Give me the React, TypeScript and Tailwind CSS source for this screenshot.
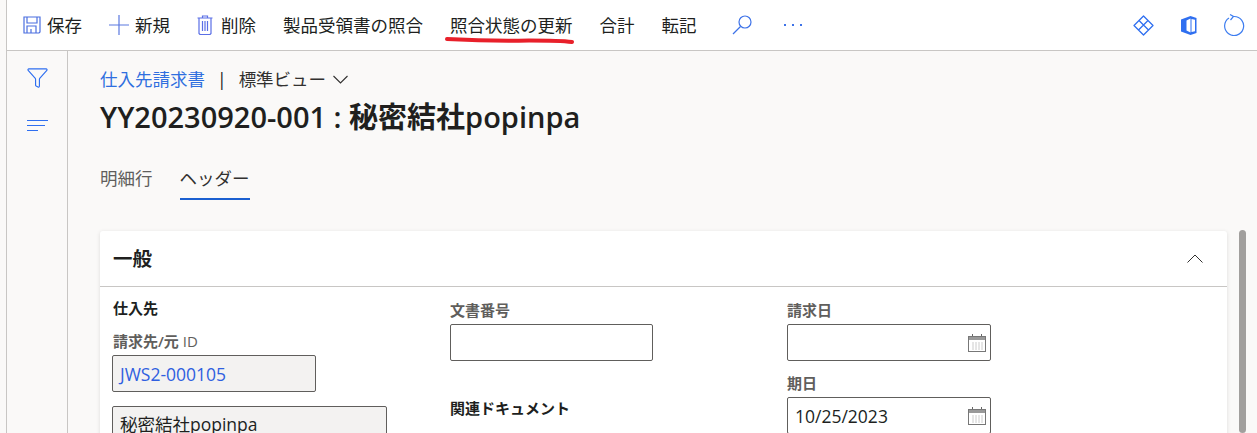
import type { ReactNode } from 'react'
import { Filter } from 'lucide-react'

const font = { fontFamily: '"Open Sans", "Noto Sans CJK JP", sans-serif' }

const SaveIcon = () => (
  <svg width="18" height="18" viewBox="0 0 18 18" fill="none" stroke="#4b6fe0" strokeWidth="1.2">
    <path d="M1 1h16v15l-1 1H1z" />
    <path d="M4 1v6h10V1M4 17v-7h9v7M8 13v4" />
  </svg>
)

const PlusIcon = () => (
  <svg width="20" height="20" viewBox="0 0 20 20" stroke="#5a78e0" strokeWidth="1.2">
    <path d="M10 0v20M0 10h20" />
  </svg>
)

const TrashIcon = () => (
  <svg width="16" height="20" viewBox="0 0 16 20" fill="none" stroke="#5a6fe6" strokeWidth="1.2">
    <path d="M.5 3h15M5.500 3V1h5v2M2 3v15.500l1 1h10l1-1V3M5.500 6v10M8 6v10M10.500 6v10" />
  </svg>
)

const SearchIcon = () => (
  <svg width="20" height="20" viewBox="0 0 20 20" fill="none" stroke="#3d72e8" strokeWidth="1.2">
    <circle cx="13" cy="7" r="6" />
    <path d="M8.500 11.500L1 19" />
  </svg>
)

const DotsIcon = () => (
  <svg width="20" height="4" viewBox="0 0 20 4" fill="#3d72e8">
    <rect x="1" y="1" width="2" height="2" />
    <rect x="9" y="1" width="2" height="2" />
    <rect x="17" y="1" width="2" height="2" />
  </svg>
)

const DiamondIcon = () => (
  <svg width="21" height="21" viewBox="0 0 21 21" fill="none" stroke="#2f6ff0" strokeWidth="1.3">
    <path d="M10.500 1l9.500 9.500-9.500 9.500L1 10.500zM6 5.500l9.500 9.500M15 5.500L5.500 15" strokeLinejoin="round" />
  </svg>
)

const OfficeIcon = () => (
  <svg width="16" height="19" viewBox="0 0 16 19">
    <path d="M0 3.500L9.500 0 15.500 2v15L9.500 19 0 15.500z" fill="#2f6ff0" />
    <path d="M5.500 4.500l4-2v14l-4-2z" fill="#fff" />
    <path d="M10.500 3l3.500 .8v11.500l-3.500 .8z" fill="#fff" />
  </svg>
)

const RefreshIcon = () => (
  <svg width="21" height="22" viewBox="0 0 21 22" fill="none" stroke="#3d7df0" strokeWidth="1.2">
    <path d="M10 2.500a9.500 9.500 0 1 1-5 1.500" />
    <path d="M6 .5L9.500 2.500 6.500 6" />
  </svg>
)

const NavIcon = () => (
  <svg width="21" height="13" viewBox="0 0 21 13" stroke="#2f6ff0" strokeWidth="1">
    <path d="M0 1.500h21M0 6.500h18M0 11.500h11" />
  </svg>
)

const CalendarIcon = () => (
  <svg width="18" height="18" viewBox="0 0 18 18" fill="none">
    <path d="M4.500 0v3M13.500 0v3" stroke="#666" />
    <rect x=".5" y="2.500" width="17" height="15" stroke="#777" />
    <path d="M1 3h16v3H1z" fill="#999" />
    <path d="M5 8.500v7M8 8.500v7M11 8.500v7M14 8.500v7" stroke="#999" strokeDasharray="1 1" />
  </svg>
)

const Field = ({ label, value, className, icon, link }: { label?: ReactNode; value?: string; className: string; icon?: boolean; link?: boolean }) => (
  <div>
    {label && <div className="text-[15px] font-semibold leading-5 text-[#605e5c] mb-[4px]">{label}</div>}
    <div className={`flex items-center justify-between border border-[#605e5c] rounded-[2px] pr-[4px] text-[17.5px] ${className} ${link ? 'text-[#2f5fe0]' : 'text-[#201f1e]'}`}>
      <span>{value}</span>
      {icon && <CalendarIcon />}
    </div>
  </div>
)

export default function App() {
  return (
    <div style={font} className="w-[1257px] h-[433px] overflow-hidden flex flex-col bg-[#faf9f8] text-[#201f1e] pl-[6px]">
      <div className="h-[51px] shrink-0 bg-white border-b border-l border-[#c8c6c4] flex items-center pl-[16px] pr-[12px] text-[17.5px] relative">
        <div className="flex items-center gap-[6px]"><SaveIcon /><span>保存</span></div>
        <div className="flex items-center gap-[6px] ml-[27px]"><PlusIcon /><span>新規</span></div>
        <div className="flex items-center gap-[8px] ml-[27px]"><TrashIcon /><span>削除</span></div>
        <span className="ml-[27px]">製品受領書の照合</span>
        <span className="ml-[27px]">照合状態の更新</span>
        <span className="ml-[27px]">合計</span>
        <span className="ml-[27px]">転記</span>
        <div className="ml-[35px]"><SearchIcon /></div>
        <div className="ml-[31px]"><DotsIcon /></div>
        <div className="ml-auto flex items-center gap-[27px]">
          <DiamondIcon />
          <OfficeIcon />
          <RefreshIcon />
        </div>
        <svg className="absolute left-[438px] top-[35px]" width="132" height="12" viewBox="0 0 132 12" fill="none">
          <path d="M2 4C30 5.500 60 6 84 5.500C100 5.500 115 5.500 127 7" stroke="#e8202a" strokeWidth="4" strokeLinecap="round" />
        </svg>
      </div>

      <div className="flex-1 flex min-h-0">
        <div className="w-[62px] shrink-0 bg-[#faf9f8] border-l border-r border-[#c8c6c4] flex flex-col items-center pt-[15px] gap-[30px]">
          <Filter size={23} strokeWidth={1.2} className="text-[#2f6ff0]" />
          <NavIcon />
        </div>

        <div className="flex-1 min-w-0 pl-[32px] pr-[11px] flex gap-[12px]">
          <div className="flex-1 min-w-0">
            <div className="flex items-center text-[17.5px] leading-6 mt-[16px]">
              <span className="text-[#2f6fdf]">仕入先請求書</span>
              <span className="mx-[12px]">|</span>
              <span className="text-[#323130]">標準ビュー</span>
              <svg className="ml-[7px]" width="15" height="9" viewBox="0 0 15 9" fill="none" stroke="#323130" strokeWidth="1.1">
                <path d="M.5 1l7 7 7-7" />
              </svg>
            </div>
            <h1 className="text-[29px] leading-10 mt-[6px] font-semibold">YY20230920-001 : <span className="font-bold">秘密結社</span>popinpa</h1>
            <div className="flex gap-[27px] mt-[28px] text-[17.5px]">
              <span className="text-[#605e5c] pb-[7px]">明細行</span>
              <span className="text-[#323130] pb-[7px] border-b-2 border-[#1a5fd0]">ヘッダー</span>
            </div>

            <div className="mt-[31px] bg-white rounded-[3px] shadow-[0_1px_4px_rgba(0,0,0,0.12)] h-[220px]">
              <div className="h-[56px] border-b border-[#c8c6c4] flex items-center justify-between pl-[13px] pr-[24px]">
                <span className="text-[19.5px] font-bold">一般</span>
                <svg width="16" height="9" viewBox="0 0 16 9" fill="none" stroke="#323130" strokeWidth="1">
                  <path d="M.5 8.500L8 1l7.500 7.500" />
                </svg>
              </div>
              <div className="grid grid-cols-[338px_337px_1fr] pl-[12px] pt-[11px]">
                <div>
                  <div className="pl-px text-[15px] font-bold leading-5 mb-[13px]">仕入先</div>
                  <Field label={<span className="pl-px">請求先/元 <span className="font-normal">ID</span></span>} value="JWS2-000105" link className="w-[204px] h-[37px] pl-[7px] bg-[#f3f2f1]" />
                  <div className="mt-[14px]"><Field value="秘密結社popinpa" className="w-[275px] h-[37px] pl-[7px] pb-[2px] bg-[#f3f2f1]" /></div>
                </div>
                <div className="pt-[2px]">
                  <Field label="文書番号" className="w-[203px] h-[37px]" />
                  <div className="text-[15px] font-bold leading-5 mt-[37px]">関連ドキュメント</div>
                </div>
                <div className="pt-[2px]">
                  <Field label="請求日" icon className="w-[204px] h-[37px] pl-[7px]" />
                  <div className="mt-[12px]"><Field label="期日" value="10/25/2023" icon className="w-[204px] h-[37px] pl-[7px]" /></div>
                </div>
              </div>
            </div>
          </div>
          <div className="w-[7px] shrink-0 mt-[179px] h-[203px] rounded-full bg-[#a19f9d]" />
        </div>
      </div>
    </div>
  )
}
